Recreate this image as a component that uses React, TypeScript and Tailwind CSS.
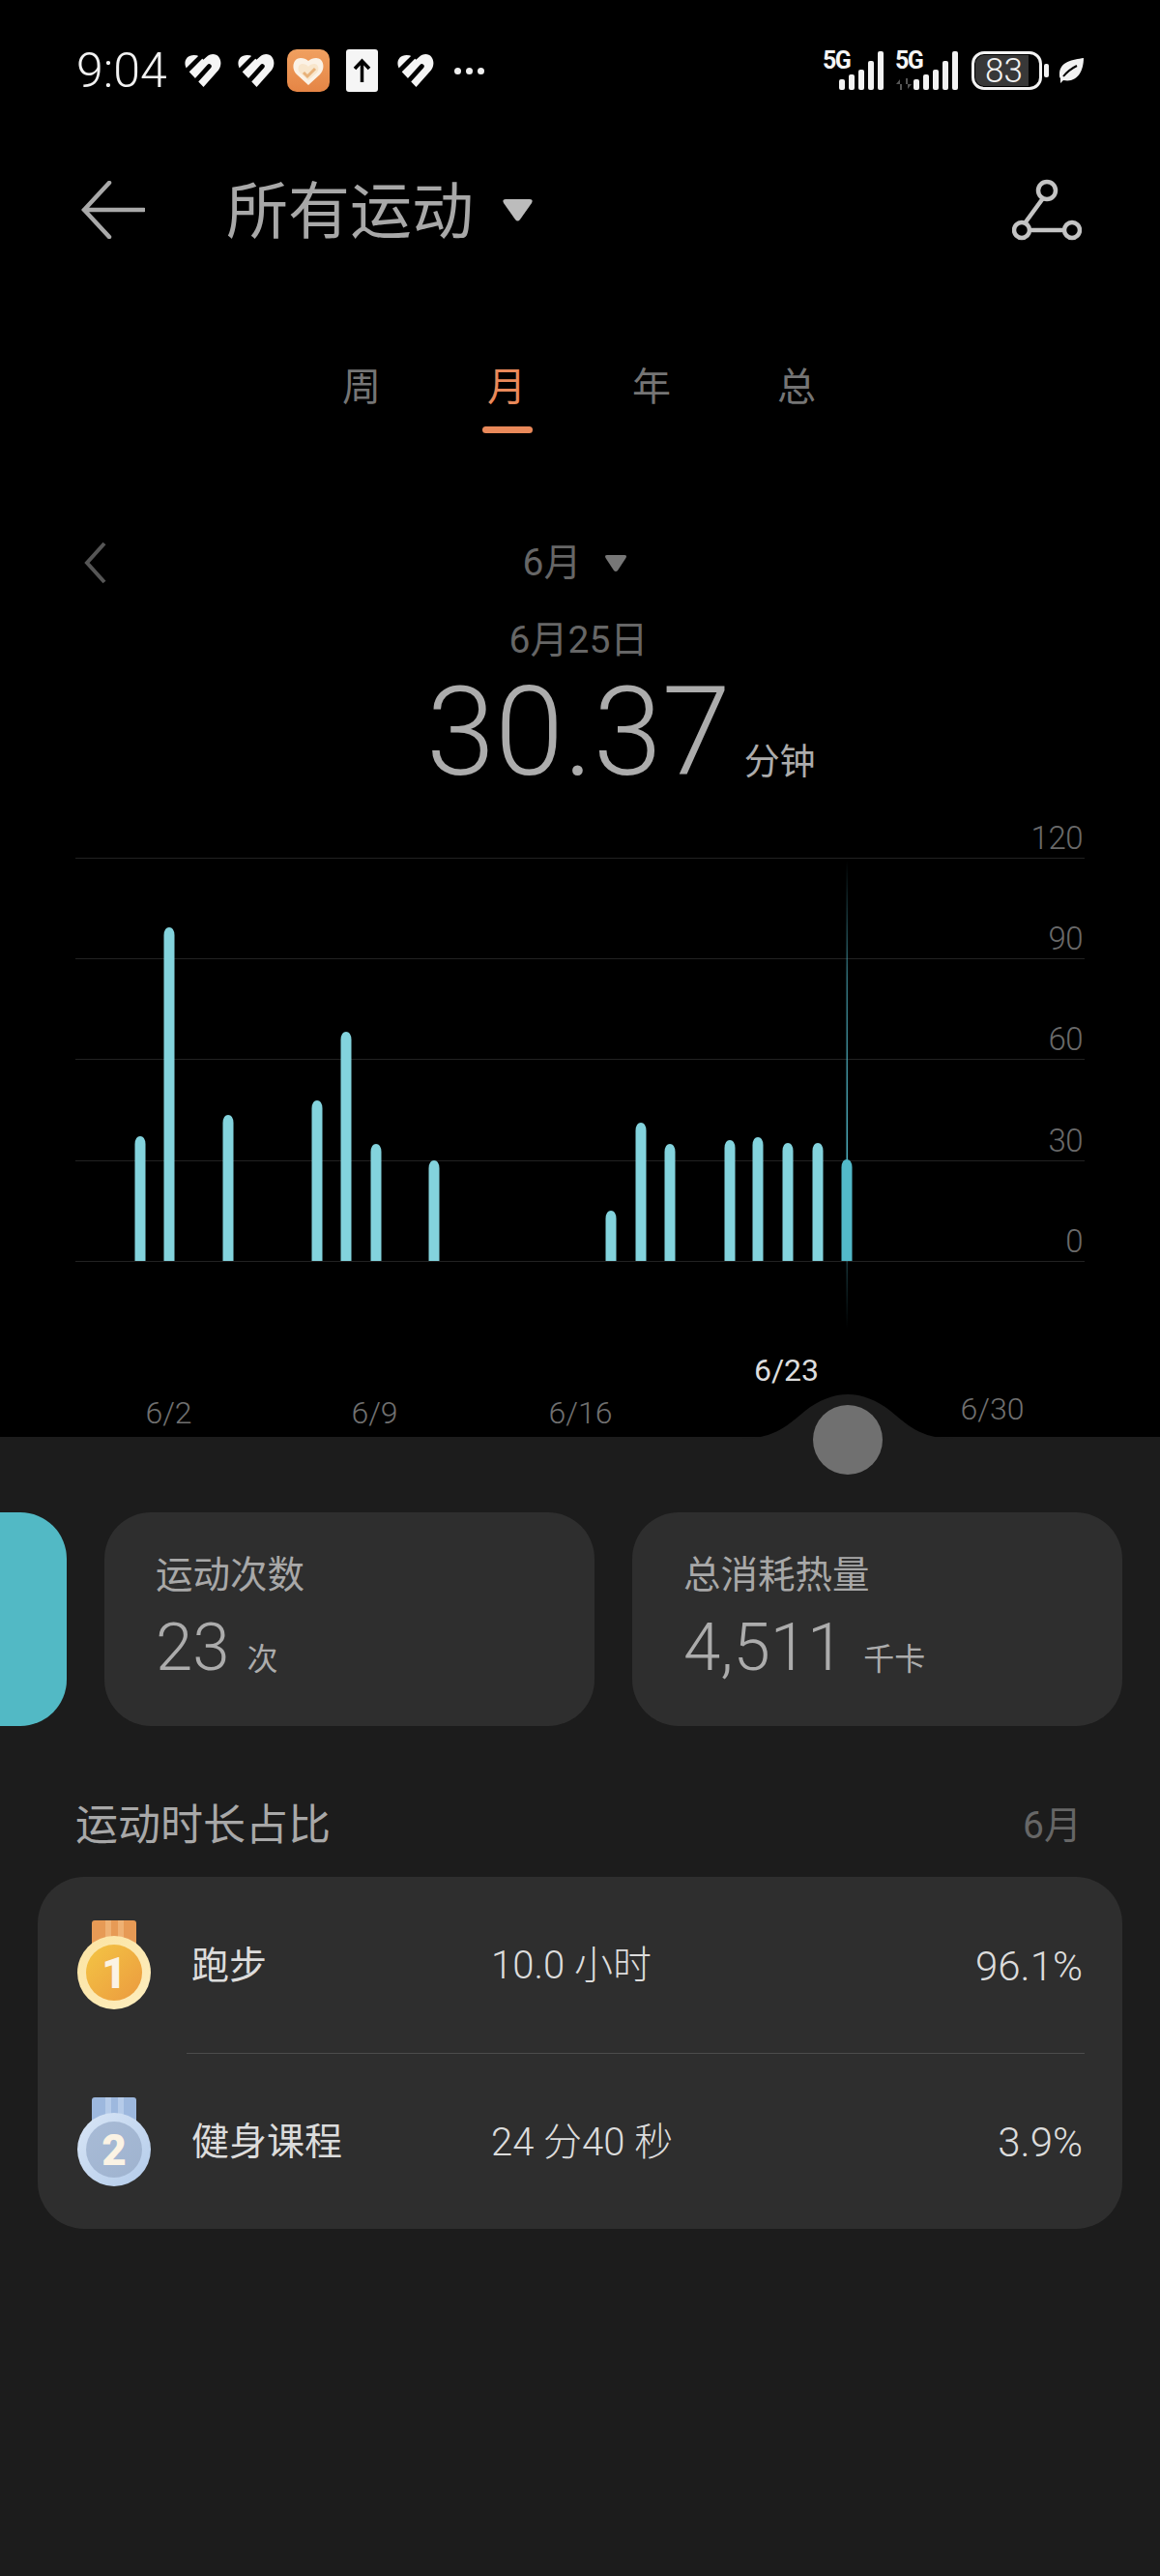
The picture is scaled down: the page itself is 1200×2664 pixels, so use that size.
import React from 'react';

const font = "font-['Roboto','Noto_Sans_CJK_SC',sans-serif]";

const bars = [
  { x: 145, top: 1175 },
  { x: 175, top: 959 },
  { x: 236, top: 1153 },
  { x: 328, top: 1138 },
  { x: 358, top: 1067 },
  { x: 389, top: 1183 },
  { x: 449, top: 1200 },
  { x: 632, top: 1252 },
  { x: 663, top: 1161 },
  { x: 693, top: 1183 },
  { x: 755, top: 1179 },
  { x: 784, top: 1176 },
  { x: 815, top: 1182 },
  { x: 846, top: 1182 },
  { x: 876, top: 1199 },
];

const gridRows = [
  { label: '120', h: 'h-[40px]' },
  { label: '90', h: 'h-[104px]' },
  { label: '60', h: 'h-[104px]' },
  { label: '30', h: 'h-[105px]' },
  { label: '0', h: 'h-[104px]' },
];

const HeartStripes = () => (
  <svg width="38" height="34" viewBox="0 0 39 35">
    <path
      d="M20 35 L3 17 C-2 11 0 1 10 1 C14 1 17 3 20 6 C23 3 26 0 30 0 C38 0 41 10 36 17 Z"
      fill="#f5f5f5"
    />
    <path d="M0 20 L21 -1" stroke="#000" strokeWidth="5" fill="none" />
    <path d="M7 34 L26 13" stroke="#000" strokeWidth="5" strokeLinecap="round" fill="none" />
  </svg>
);

const Signal = () => (
  <svg width="46" height="40" viewBox="0 0 46 40">
    <rect x="0" y="29" width="6" height="11" rx="2" fill="#f2f2f2" />
    <rect x="10" y="24" width="6" height="16" rx="2" fill="#f2f2f2" />
    <rect x="20" y="19" width="6" height="21" rx="2" fill="#f2f2f2" />
    <rect x="30" y="10" width="6" height="30" rx="2" fill="#f2f2f2" />
    <rect x="40" y="0" width="6" height="40" rx="2" fill="#f2f2f2" />
  </svg>
);

const Medal = ({ n, gold }: { n: string; gold: boolean }) => {
  const id = gold ? 'g' : 's';
  return (
    <svg width="76" height="92" viewBox="0 0 76 92" className="shrink-0">
      <defs>
        <linearGradient id={`${id}rim`} x1="0" y1="0" x2="1" y2="1">
          <stop offset="0" stopColor={gold ? '#fbe3a2' : '#d9e6f6'} />
          <stop offset="1" stopColor={gold ? '#fdeebf' : '#b3cbea'} />
        </linearGradient>
        <linearGradient id={`${id}in`} x1="0" y1="0" x2="1" y2="1">
          <stop offset="0" stopColor={gold ? '#f4c544' : '#a8bbd6'} />
          <stop offset="1" stopColor={gold ? '#eb9a3f' : '#9fb3cf'} />
        </linearGradient>
      </defs>
      <path d="M15 3 a3 3 0 0 1 3 -3 H58 a3 3 0 0 1 3 3 V26 H15 Z" fill={gold ? '#e79a55' : '#9db8de'} />
      <rect x="29" y="0" width="6" height="22" fill={gold ? '#efb173' : '#b5cbe9'} />
      <rect x="42" y="0" width="6" height="22" fill={gold ? '#efb173' : '#b5cbe9'} />
      <circle cx="38" cy="54" r="38" fill={`url(#${id}rim)`} />
      <circle cx="38" cy="54" r="29" fill={`url(#${id}in)`} />
      <text x="38" y="70" textAnchor="middle" fontSize="44" fontWeight="900" fontFamily="Roboto" fill="#fbf3e4">
        {n}
      </text>
    </svg>
  );
};

const StatCard = ({ title, value, unit, gap }: { title: string; value: string; unit: string; gap: string }) => (
  <div className="w-[507px] h-[221px] rounded-[48px] bg-[#2e2e2e] pl-[53px] pt-[40px] shrink-0">
    <div className="text-[38.500px] leading-[50px] text-[#a8a8a8]">{title}</div>
    <div className="flex items-baseline mt-[12px] text-[#acacac]">
      <span className="text-[69px] leading-[76px] font-light">{value}</span>
      <span className={`text-[32px] ${gap}`}>{unit}</span>
    </div>
  </div>
);

export default function App() {
  return (
    <div className={`w-[1200px] h-[2664px] overflow-hidden bg-black flex flex-col ${font}`}>
      {/* status bar */}
      <div className="h-[146px] pl-[79px] flex items-center shrink-0">
        <span className="text-[50px] font-light text-[#f2f2f2] w-[112px] leading-none">9:04</span>
        <HeartStripes />
        <div className="ml-[17px]"><HeartStripes /></div>
        <svg width="44" height="44" viewBox="0 0 44 44" className="ml-[13px]">
          <defs>
            <linearGradient id="app" x1="0" y1="0" x2="0" y2="1">
              <stop offset="0" stopColor="#f0a060" />
              <stop offset="1" stopColor="#e58545" />
            </linearGradient>
          </defs>
          <rect width="44" height="44" rx="10" fill="url(#app)" />
          <path d="M22 37 L10 26 C4 20 6 9 14 9 C17 9 20 10 22 12 C24 10 27 9 30 9 C38 9 40 20 34 26 Z" fill="#fbf2e6" />
          <path d="M22 32 L13 24 C10 20 12 15 16 15 C18 15 21 16 22 18 C23 16 26 15 28 15 C32 15 34 20 31 24 Z" fill="#f8e6cc" />
          <path d="M17 24 L21 28 L29 20" stroke="#e8b27a" strokeWidth="3" fill="none" />
        </svg>
        <svg width="33" height="44" viewBox="0 0 33 44" className="ml-[17px]">
          <rect width="33" height="44" rx="3" fill="#f5f5f5" />
          <path d="M16.5 34 V13 M9 20 L16.5 12 L24 20" stroke="#000" strokeWidth="3.5" fill="none" />
        </svg>
        <div className="ml-[20px]"><HeartStripes /></div>
        <div className="ml-[21px] flex gap-[5px]">
          <span className="w-[7px] h-[7px] rounded-full bg-[#eeeeee]" />
          <span className="w-[7px] h-[7px] rounded-full bg-[#eeeeee]" />
          <span className="w-[7px] h-[7px] rounded-full bg-[#eeeeee]" />
        </div>
        <div className="ml-auto flex items-center pr-[79px]">
          <div className="relative w-[60px] h-[40px]">
            <span className="absolute left-0 -top-[3px] text-[25px] leading-[26px] font-bold text-[#f5f5f5] tracking-[-1.5px]">5G</span>
            <div className="absolute left-[17px] top-0"><Signal /></div>
          </div>
          <div className="relative w-[62px] h-[40px] ml-[15px]">
            <span className="absolute left-0 -top-[3px] text-[25px] leading-[26px] font-bold text-[#f5f5f5] tracking-[-1.5px]">5G</span>
            <svg width="18" height="12" viewBox="0 0 18 12" className="absolute left-0 top-[28px]">
              <path d="M1 6 L5 1 V12 H7 V6 Z M17 6 L13 11 V0 H11 V6 Z" fill="#555" />
            </svg>
            <div className="absolute left-[19px] top-0"><Signal /></div>
          </div>
          <div className="ml-[17px] w-[73px] h-[40px] rounded-[13px] border-[3px] border-[#f2f2f2] p-[1px] overflow-hidden relative">
            <div className="h-full w-[55px] bg-[#383838] rounded-l-[9px] flex items-center pl-[10px]">
              <span className="text-[35px] leading-none font-light text-[#f2f2f2]">83</span>
            </div>
          </div>
          <span className="ml-[2px] w-[5px] h-[14px] rounded-[2px] bg-[#f2f2f2]" />
          <svg width="27" height="26" viewBox="0 0 27 26" className="ml-[9px]">
            <path d="M27 0 C16 2 2 3 2 17 C2 19 2 20 3 21 L3 26 L6 23 C20 26 27 14 27 0 Z" fill="#f2f2f2" />
            <path d="M6 19 C10 14 14 11 20 8" stroke="#000" strokeWidth="2" fill="none" />
          </svg>
        </div>
      </div>

      {/* title bar */}
      <div className="h-[142px] pl-[84px] pr-[81px] flex items-center shrink-0">
        <svg width="66" height="60" viewBox="0 0 66 60">
          <path d="M29 2 L3 30 L29 58 M3 30 H65" stroke="#a9a9a9" strokeWidth="4.5" fill="none" strokeLinecap="round" />
        </svg>
        <span className="ml-[84px] text-[64px] leading-none text-[#a8a8a8] pt-[5px]">所有运动</span>
        <svg width="33" height="24" viewBox="0 0 33 24" className="ml-[29px]">
          <path d="M4 1 H29 Q33 1 31 5 L19 22 Q16.500 25 14 22 L2 5 Q0 1 4 1 Z" fill="#bcbcbc" />
        </svg>
        <svg width="72" height="64" viewBox="0 0 72 64" className="ml-auto">
          <g stroke="#c4c4c4" strokeWidth="4.500" fill="none">
            <circle cx="36" cy="12" r="9" />
            <circle cx="10" cy="53" r="8" />
            <circle cx="62" cy="53" r="8" />
            <path d="M32 20 L13 46 M18 53 H54" />
          </g>
        </svg>
      </div>

      {/* range tabs */}
      <div className="pl-[354px] flex gap-[110px] h-[268px] pt-[91px] shrink-0 text-[40px] leading-[44px] text-[#757575]">
        <span>周</span>
        <span className="relative text-[#e9895a]">
          月
          <span className="absolute left-[-5px] top-[62px] w-[52px] h-[7px] rounded-full bg-[#e9895a]" />
        </span>
        <span>年</span>
        <span>总</span>
      </div>

      {/* month picker */}
      <div className="relative h-[44px] mt-[4px] flex items-center justify-center shrink-0 text-[#666666]">
        <svg width="24" height="44" viewBox="0 0 24 44" className="absolute left-[87px] top-0">
          <path d="M21 2 L3 22 L21 42" stroke="#555555" strokeWidth="4" fill="none" />
        </svg>
        <span className="text-[39px] leading-none ml-[-10px]">6月</span>
        <svg width="24" height="19" viewBox="0 0 24 19" className="ml-[24px]">
          <path d="M3 1 H21 Q24 1 22.500 4 L14 17 Q12 19 10 17 L1.500 4 Q0 1 3 1 Z" fill="#777777" />
        </svg>
      </div>

      {/* selected value */}
      <div className="text-center text-[39px] leading-[44px] text-[#666666] mt-[36px] ml-[-3px] shrink-0">6月25日</div>
      <div className="flex items-baseline pl-[441px] h-[130px] shrink-0 mt-[8px] text-[#acacac]">
        <span className="text-[128px] leading-[130px] font-light">30.37</span>
        <span className="text-[37px] ml-[14px]">分钟</span>
      </div>

      {/* chart */}
      <div className="relative ml-[78px] w-[1044px] shrink-0 mt-[26px]">
        {gridRows.map(row => (
          <div key={row.label} className={`${row.h} border-b-[1px] border-[#222222] flex items-end justify-end`}>
            <span className="text-[33px] leading-[40px] font-light text-[#6a6a6a] tracking-[-0.5px] pr-[2px]">{row.label}</span>
          </div>
        ))}
        <svg width="1044" height="530" viewBox="78 848 1044 530" className="absolute left-0 top-0">
          <defs>
            <linearGradient id="cursor" x1="0" y1="0" x2="0" y2="1">
              <stop offset="0" stopColor="#52b9c9" stopOpacity="0" />
              <stop offset="0.25" stopColor="#52b9c9" stopOpacity="0.6" />
              <stop offset="0.7" stopColor="#52b9c9" stopOpacity="1" />
              <stop offset="0.85" stopColor="#52b9c9" stopOpacity="0.3" />
              <stop offset="1" stopColor="#52b9c9" stopOpacity="0" />
            </linearGradient>
          </defs>
          {bars.map((bar, i) => (
            <path
              key={bar.x}
              d={`M${bar.x - 5.5} 1304 V${bar.top + 8} Q${bar.x - 5} ${bar.top} ${bar.x} ${bar.top} Q${bar.x + 5} ${bar.top} ${bar.x + 5.5} ${bar.top + 8} V1304 Z`}
              fill={i === bars.length - 1 ? '#52b9c9' : '#83d3dd'}
            />
          ))}
          <rect x="875.500" y="890" width="1.500" height="484" fill="url(#cursor)" />
        </svg>
      </div>

      {/* date axis */}
      <div className="flex h-[181px] pl-[68px] shrink-0 text-[32px] font-light text-[#707070]">
        {['6/2', '6/9', '6/16', '6/23', '6/30'].map(d => (
          <div
            key={d}
            className={
              d === '6/23'
                ? 'w-[213px] text-center text-[#dddddd] pt-[92px] leading-[40px] font-normal'
                : d === '6/30'
                  ? 'w-[213px] text-center pt-[132px] leading-[40px]'
                  : 'w-[213px] text-center pt-[136px] leading-[40px]'
            }
          >
            {d}
          </div>
        ))}
      </div>

      {/* bottom panel */}
      <div className="relative flex-1 bg-[#1c1c1c] pt-[78px]">
        <svg width="220" height="46" viewBox="0 0 220 46" className="absolute left-[767px] -top-[44px]">
          <path d="M0 46 C35 46 50 30 66 17 C80 6 95 0 110 0 C125 0 140 6 154 17 C170 30 185 46 220 46 Z" fill="#1c1c1c" />
        </svg>
        <div className="absolute left-[841px] -top-[33px] w-[72px] h-[72px] rounded-full bg-[#707070]" />

        <div className="flex">
          <div className="w-[69px] h-[221px] rounded-r-[48px] bg-[#52b9c5] shrink-0" />
          <div className="ml-[39px]"><StatCard title="运动次数" value="23" unit="次" gap="ml-[18px]" /></div>
          <div className="ml-[39px]"><StatCard title="总消耗热量" value="4,511" unit="千卡" gap="ml-[20px]" /></div>
        </div>

        <div className="flex justify-between items-center pl-[78px] pr-[81px] mt-[78px] h-[50px]">
          <span className="text-[44px] leading-none text-[#a8a8a8]">运动时长占比</span>
          <span className="text-[39px] leading-none text-[#666666]">6月</span>
        </div>

        <div className="ml-[39px] w-[1122px] h-[364px] mt-[28px] rounded-[48px] bg-[#2e2e2e] flex flex-col">
          <div className="h-[182px] pl-[41px] pr-[41px] flex items-center text-[40px] text-[#dcdcdc] font-light">
            <Medal n="1" gold />
            <span className="ml-[42px] w-[310px] font-normal text-[39px] pt-[2px]">跑步</span>
            <span className="pt-[2px]">10.0 小时</span>
            <span className="ml-auto text-[42px] pt-[2px]">96.1%</span>
          </div>
          <div className="ml-[154px] mr-[39px] h-px bg-[#4c4c4c]" />
          <div className="h-[181px] pl-[41px] pr-[41px] flex items-center text-[40px] text-[#dcdcdc] font-light">
            <Medal n="2" gold={false} />
            <span className="ml-[42px] w-[310px] font-normal text-[39px] pt-[2px]">健身课程</span>
            <span className="pt-[2px]">24 分40 秒</span>
            <span className="ml-auto text-[42px] pt-[2px]">3.9%</span>
          </div>
        </div>
      </div>
    </div>
  );
}
